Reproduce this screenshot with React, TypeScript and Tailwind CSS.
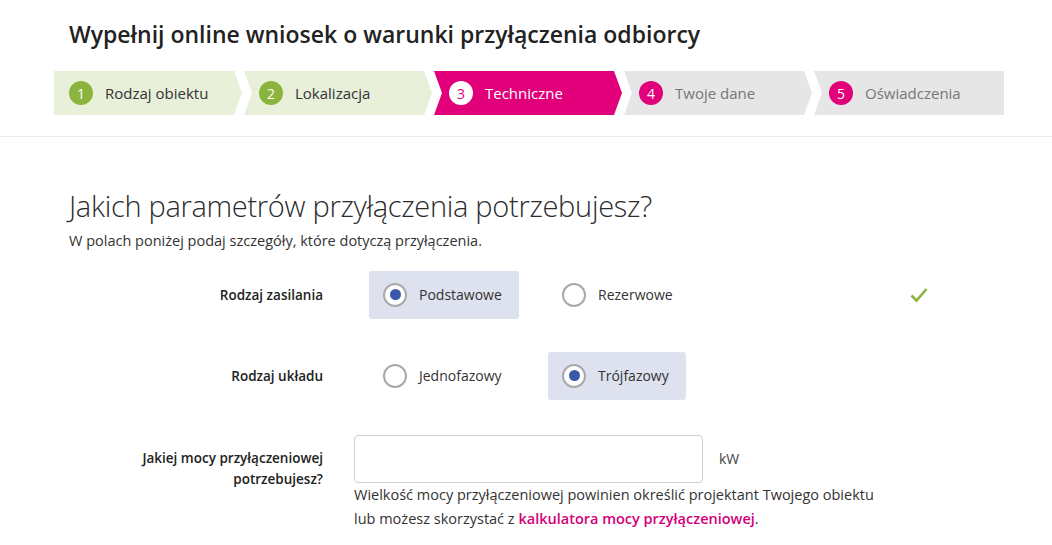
import React, { useState } from 'react';

const steps = [
  { n: 1, label: 'Rodzaj obiektu', state: 'done' },
  { n: 2, label: 'Lokalizacja', state: 'done' },
  { n: 3, label: 'Techniczne', state: 'active' },
  { n: 4, label: 'Twoje dane', state: 'todo' },
  { n: 5, label: 'Oświadczenia', state: 'todo' },
];

const clipFor = (i: number, last: boolean) => {
  if (i === 0) return 'polygon(0 0, calc(100% - 8px) 0, 100% 50%, calc(100% - 8px) 100%, 0 100%)';
  if (last) return 'polygon(0 0, 100% 0, 100% 100%, 0 100%, 8px 50%)';
  return 'polygon(0 0, calc(100% - 8px) 0, 100% 50%, calc(100% - 8px) 100%, 0 100%, 8px 50%)';
};

const Radio: React.FC<{ checked: boolean }> = ({ checked }) => (
  <span className="w-6 h-6 rounded-full border-2 border-[#a9a9a9] bg-white flex items-center justify-center shrink-0">
    {checked && <span className="w-[11px] h-[11px] rounded-full bg-[#3b57a8]" />}
  </span>
);

interface OptionProps {
  label: string;
  checked: boolean;
  onClick: () => void;
}

const Option: React.FC<OptionProps> = ({ label, checked, onClick }) => (
  <div className="w-[179px]">
    <button
      onClick={onClick}
      className={`h-12 inline-flex items-center gap-3 pl-[14px] pr-[17px] rounded-[3px] text-[14px] text-[#333] ${
        checked ? 'bg-[#dee2ee]' : 'bg-transparent'
      }`}
    >
      <Radio checked={checked} />
      <span>{label}</span>
    </button>
  </div>
);

export default function App() {
  const [supply, setSupply] = useState('Podstawowe');
  const [phase, setPhase] = useState('Trójfazowy');

  return (
    <div className="w-[1052px] h-[545px] bg-white overflow-hidden" style={{ fontFamily: '"Open Sans", "Noto Sans", sans-serif' }}>
      {/* Header with steps */}
      <div className="border-b border-[#ececec] pb-[21px]">
        <h1 className="pl-[69px] pt-[18px] text-[23px] leading-8 font-semibold text-[#222]">
          Wypełnij online wniosek o warunki przyłączenia odbiorcy
        </h1>
        <div className="ml-[54px] mt-[21px] flex gap-[2px]">
          {steps.map((s, i) => {
            const last = i === steps.length - 1;
            const bg = s.state === 'done' ? 'bg-[#e8f0da]' : s.state === 'active' ? 'bg-[#e2007a]' : 'bg-[#e6e6e6]';
            const circle =
              s.state === 'done'
                ? 'bg-[#8bb43e] text-white'
                : s.state === 'active'
                ? 'bg-white text-[#e2007a]'
                : 'bg-[#e2007a] text-white';
            const text = s.state === 'done' ? 'text-[#333]' : s.state === 'active' ? 'text-white' : 'text-[#777]';
            return (
              <div
                key={s.n}
                className={`${last ? 'w-[190px]' : 'w-[188px]'} h-11 flex items-center pl-[15px] ${bg}`}
                style={{ clipPath: clipFor(i, last) }}
              >
                <span className={`w-6 h-6 rounded-full flex items-center justify-center text-[14px] ${circle}`}>{s.n}</span>
                <span className={`ml-3 text-[15px] ${text}`}>{s.label}</span>
              </div>
            );
          })}
        </div>
      </div>

      {/* Content */}
      <div className="pl-[69px]">
        <h2 className="mt-[51px] text-[29px] leading-9 font-light text-[#2b2b2b] tracking-[-0.3px]">
          Jakich parametrów przyłączenia potrzebujesz?
        </h2>
        <p className="mt-[6px] text-[14.5px] text-[#333]">W polach poniżej podaj szczegóły, które dotyczą przyłączenia.</p>

        <div className="mt-[19px] flex items-center">
          <div className="w-[254px] text-right text-[13.5px] font-semibold text-[#222]">Rodzaj zasilania</div>
          <div className="ml-[46px] flex items-center">
            <Option label="Podstawowe" checked={supply === 'Podstawowe'} onClick={() => setSupply('Podstawowe')} />
            <Option label="Rezerwowe" checked={supply === 'Rezerwowe'} onClick={() => setSupply('Rezerwowe')} />
          </div>
          <svg className="ml-[183px] w-[18px] h-[16px]" viewBox="0 0 18 16" fill="none">
            <path d="M1.5 8.5 L6.5 13.5 L16.5 2" stroke="#8bb43e" strokeWidth="2.6" />
          </svg>
        </div>

        <div className="mt-[33px] flex items-center">
          <div className="w-[254px] text-right text-[13.5px] font-semibold text-[#222]">Rodzaj układu</div>
          <div className="ml-[46px] flex items-center">
            <Option label="Jednofazowy" checked={phase === 'Jednofazowy'} onClick={() => setPhase('Jednofazowy')} />
            <Option label="Trójfazowy" checked={phase === 'Trójfazowy'} onClick={() => setPhase('Trójfazowy')} />
          </div>
        </div>

        <div className="mt-[35px] flex items-start">
          <div className="w-[254px] pt-[13px] text-right text-[13.5px] leading-[21px] font-semibold text-[#222]">
            Jakiej mocy przyłączeniowej
            <br />
            potrzebujesz?
          </div>
          <div className="ml-[31px]">
            <div className="flex items-center">
              <input className="w-[349px] h-12 border border-[#cfcfcf] rounded-[4px] px-3 outline-none" />
              <span className="ml-[16px] text-[14px] text-[#444]">kW</span>
            </div>
            <p className="text-[14.5px] leading-6 text-[#333]">
              Wielkość mocy przyłączeniowej powinien określić projektant Twojego obiektu
              <br />
              lub możesz skorzystać z{' '}
              <a href="#" className="font-semibold text-[#d4007a]">
                kalkulatora mocy przyłączeniowej
              </a>
              .
            </p>
          </div>
        </div>
      </div>
    </div>
  );
}
